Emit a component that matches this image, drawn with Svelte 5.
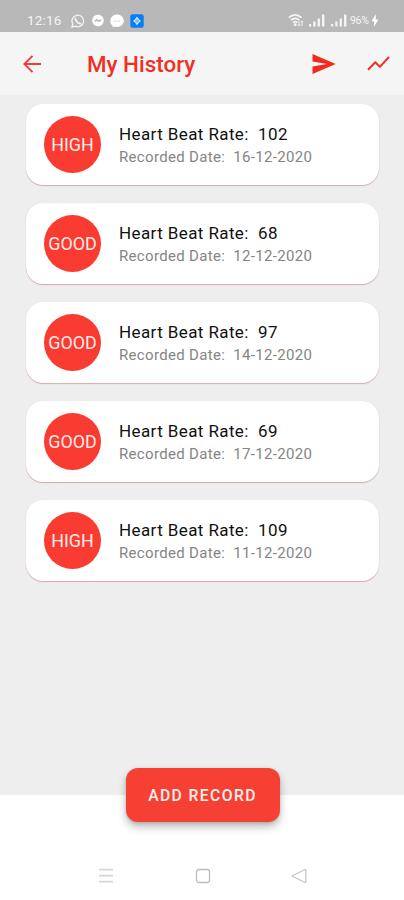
<script>
  const records = [
    { level: 'HIGH', rate: 102, date: '16-12-2020' },
    { level: 'GOOD', rate: 68, date: '12-12-2020' },
    { level: 'GOOD', rate: 97, date: '14-12-2020' },
    { level: 'GOOD', rate: 69, date: '17-12-2020' },
    { level: 'HIGH', rate: 109, date: '11-12-2020' }
  ];
</script>

{#snippet signal()}
  <svg class="signal" width="16" height="13" viewBox="0 0 16 13" fill="#f5f5f5">
    <rect x="0" y="10" width="2.2" height="2.5" /><rect x="4.3" y="7.5" width="2.2" height="5" />
    <rect x="8.7" y="4.5" width="2.2" height="8" /><rect x="13" y="0.5" width="2.4" height="12" />
  </svg>
{/snippet}

<div class="screen">
  <div class="status">
    <span class="time">12:16</span>
    <div class="notices">
      <svg width="14" height="14" viewBox="0 0 14 14" fill="none" stroke="#f5f5f5">
        <path d="M1 13l.8-3.1a5.8 5.8 0 1 1 2.3 2.2z" stroke-width="1.3" />
        <path d="M4.7 4c-.7.8-.2 2.2 1.4 3.8s3.1 2.2 3.9 1.4" stroke-width="1.7" />
      </svg>
      <svg width="12" height="13" viewBox="0 0 12 13">
        <path d="M6 .7C2.7.7.3 3 .3 6.5c0 3.400 2.400 5.800 5.700 5.800s5.700-2.400 5.700-5.800S9.300.7 6 .7z" fill="#fff" />
        <path d="M2.800 7.300l2.100-1.400 2 1.100 2.200-1.100" stroke="#b8b8b8" stroke-width="1.700" fill="none" />
      </svg>
      <svg width="14" height="14" viewBox="0 0 14 14">
        <path d="M7 .6C3.200.6.3 3.300.3 7c0 2 .9 3.600 2.300 4.700v1.900l1.900-1C9.400 14 13.700 11.200 13.700 7 13.700 3.300 10.800.6 7 .6z" fill="#fff" />
        <path d="M3.800 7.200h6.400" stroke="#d5d5d5" stroke-width="1.200" stroke-dasharray="1.600 .8" />
      </svg>
      <svg width="14" height="14" viewBox="0 0 14 14">
        <rect x=".3" y=".3" width="13.400" height="13.400" rx="2.200" fill="#087cf9" />
        <path d="M7 2.600L8.700 5 11 7 8.700 8.700 7 11.500 5.300 8.700 3 7l2.300-2z" fill="#d7ebff" />
        <path d="M7 5v4M5 7h4" stroke="#3c9afb" stroke-width=".8" />
      </svg>
    </div>
    <div class="meters">
      <svg width="16" height="13" viewBox="0 0 16 13" fill="none" stroke="#f5f5f5" stroke-width="1.700">
        <path d="M.8 3.700c4-3.500 8.800-3.500 12.800 0M2.900 6.200c2.700-2.300 5.900-2.300 8.600 0M5 8.600c1.400-1.200 3-1.200 4.400 0" />
        <circle cx="7.200" cy="10.800" r=".6" fill="#f5f5f5" />
        <path d="M11 7v5M9.800 10.700L11 12l1.200-1.300M14 12V7M12.800 8.300L14 7l1.200 1.300" stroke-width=".9" />
      </svg>
      {@render signal()}
      {@render signal()}
      <span class="battery">96%</span>
      <svg width="8" height="13" viewBox="0 0 8 13"><path d="M5 .3L.5 7.200h2.700L2.800 12.700 7.500 5.500H4.700z" fill="#fff" /></svg>
    </div>
  </div>

  <header>
    <svg class="back" width="18" height="18" viewBox="0 0 18 18" fill="none" stroke="#f33b30" stroke-width="1.900">
      <path d="M18 9H1.500M9.500 .8L1.300 9l8.200 8.200" />
    </svg>
    <h1>My History</h1>
    <svg class="send" width="24" height="20" viewBox="0 0 24 20" fill="#ef2b20">
      <path d="M.5 0L23.700 10 .5 20v-7.500L15 10 .5 7.500z" />
    </svg>
    <svg class="trend" width="23" height="15" viewBox="0 0 23 15" fill="none" stroke="#ef3024" stroke-width="2">
      <path d="M1 13.700L8.300 6.300l4.600 4.600L22 1" stroke-linejoin="round" />
    </svg>
  </header>

  <main>
    {#each records as record}
      <article>
        <div class="badge">{record.level}</div>
        <div class="details">
          <div class="rate">Heart Beat Rate:&nbsp; {record.rate}</div>
          <div class="date">Recorded Date:&nbsp; {record.date}</div>
        </div>
      </article>
    {/each}
  </main>

  <footer>
    <button>ADD RECORD</button>
    <nav>
      <svg width="16" height="16" viewBox="0 0 16 16" stroke="#d6d6d6" stroke-width="1.700"><path d="M1 1.700h14M1 7.700h14M1 13.700h14" /></svg>
      <svg width="16" height="16" viewBox="0 0 16 16" fill="none" stroke="#bdbdbd" stroke-width="1.300"><rect x="1.500" y="1.500" width="13" height="13" rx="2.500" /></svg>
      <svg width="16" height="16" viewBox="0 0 16 16" fill="none" stroke="#c4c4c4" stroke-width="1.200" stroke-linejoin="round"><path d="M14.300 1.500q.5 0 .5.500v12q0 .5-.5.500L1.600 8.500q-.7-.5 0-1z" /></svg>
    </nav>
  </footer>
</div>

<style>
  .screen {
    width: 404px;
    height: 900px;
    display: flex;
    flex-direction: column;
    overflow: hidden;
    background: #fff;
    font-family: Roboto, "Liberation Sans", sans-serif;
  }
  svg { display: block; flex: none; }
  .status {
    height: 32px;
    flex: none;
    box-sizing: border-box;
    padding: 9px 25px 0 27px;
    display: flex;
    align-items: center;
    background: #b8b8b8;
    color: #f5f5f5;
  }
  .time { width: 44px; font-size: 13.5px; line-height: 16px; padding-bottom: 1px; letter-spacing: 0.15px; }
  .notices { display: flex; align-items: center; gap: 6px; }
  .notices svg:nth-child(2) { margin: 0 1px; }
  .notices svg:nth-child(3) { margin-left: -1px; }
  .meters { margin-left: auto; display: flex; align-items: center; }
  .signal { margin-left: 5px; }
  .signal + .signal { margin-left: 6px; }
  .battery { width: 20px; margin: 0 1px 0 3px; font-size: 10.5px; letter-spacing: -0.3px; }
  header {
    height: 63px;
    flex: none;
    box-sizing: border-box;
    padding: 0 14px 0 23px;
    display: flex;
    align-items: center;
    background: #f5f5f5;
  }
  h1 {
    margin: 0 0 0 46px;
    color: #ef3024;
    font-size: 22.4px;
    font-weight: 500;
    line-height: 28px;
    white-space: nowrap;
  }
  .send { margin-left: auto; }
  .trend { margin-left: 31px; }
  main {
    height: 700px;
    flex: none;
    box-sizing: border-box;
    padding: 9px 25px 0 26px;
    display: flex;
    flex-direction: column;
    gap: 18px;
    background: #eee;
  }
  article {
    height: 81px;
    flex: none;
    box-sizing: border-box;
    padding: 0 18px;
    display: flex;
    align-items: center;
    gap: 18px;
    border-radius: 17px;
    background: #fff;
    box-shadow: 0 1px 1px #d9a9a9, 0 0 1px #dedede;
  }
  .badge {
    width: 57px;
    height: 57px;
    flex: none;
    box-sizing: border-box;
    padding-bottom: 1px;
    display: flex;
    align-items: center;
    justify-content: center;
    border-radius: 50%;
    background: #f93b31;
    color: #ffebe8;
    font-size: 17.9px;
  }
  .details { white-space: nowrap; }
  .rate { color: #111; font-size: 17px; line-height: 24px; letter-spacing: 0.4px; }
  .date { color: #858585; font-size: 15px; line-height: 22px; letter-spacing: 0.32px; }
  footer {
    height: 105px;
    display: flex;
    flex-direction: column;
    align-items: center;
  }
  button {
    position: relative;
    width: 154px;
    height: 54px;
    margin: -27px 0 0 1px;
    padding: 0;
    border: 0;
    border-radius: 12px;
    background: #f64033;
    color: #fff0ed;
    box-shadow: 0 5px 8px rgb(0 0 0 / 26%), 0 1px 3px rgb(0 0 0 / 14%);
    font: 500 15.7px Roboto, "Liberation Sans", sans-serif;
    letter-spacing: 1.4px;
  }
  nav {
    width: 209px;
    margin: 46px 0 0 1px;
    display: flex;
    justify-content: space-between;
  }
</style>
